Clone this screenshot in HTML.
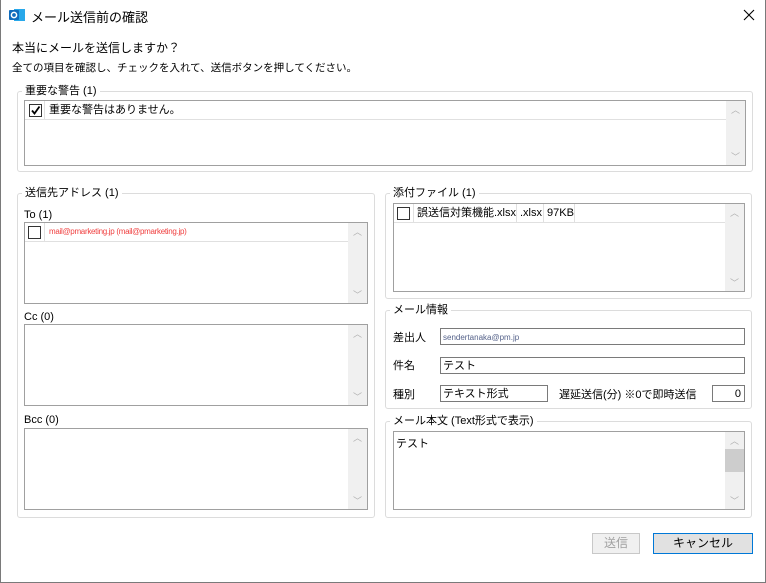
<!DOCTYPE html>
<html><head><meta charset="utf-8"><style>
*{box-sizing:border-box;margin:0;padding:0}
body{width:766px;height:583px;overflow:hidden;background:#fff;font-family:"Liberation Sans","Noto Sans CJK JP",sans-serif;color:#000;position:relative}
.win{position:absolute;left:0;top:0;width:766px;height:583px;border:1px solid #7a7a7a;border-top:none}
.a{position:absolute;white-space:nowrap}
.grp{position:absolute;border:1px solid #dcdcdc;border-radius:3px}
.gl{position:absolute;background:#fff;padding:0 3px;font-size:11px;line-height:13px;color:#000}
.list{position:absolute;border:1px solid #a0a0a0;background:#fff}
.sb{position:absolute;right:0;top:0;bottom:0;width:19px;background:#f0f0f0}
.sb .u,.sb .d{position:absolute;left:0;width:19px;text-align:center;font-size:9px;color:#b0b0b0}
.cb{position:absolute;width:13px;height:13px;border:1px solid #333;background:#fff}
.inp{position:absolute;border:1px solid #7a7a7a;background:#fff;font-size:11px;line-height:15px;padding-left:2px;padding-top:1px}
.lbl{font-size:11px}
.cell{position:absolute;top:3px;font-size:11px;line-height:13px}
</style></head><body>
<div class="win">
<svg class="a" style="left:8px;top:7px" width="17" height="16" viewBox="0 0 17 16"><rect x="5" y="2" width="11" height="12" fill="#28a8ea"/><rect x="0" y="3" width="10" height="10" rx="1" fill="#0f6cbd"/><circle cx="5" cy="8" r="2.6" fill="none" stroke="#fff" stroke-width="1.5"/></svg>
<div class="a" style="left:30px;top:7px;font-size:13px">メール送信前の確認</div>
<svg class="a" style="left:742px;top:9px" width="12" height="12"><path d="M1 1L11 11M11 1L1 11" stroke="#000" stroke-width="1.1"/></svg>
<div class="a" style="left:11px;top:39px;font-size:12px">本当にメールを送信しますか？</div>
<div class="a" style="left:11px;top:60px;font-size:10.5px">全ての項目を確認し、チェックを入れて、送信ボタンを押してください。</div>

<div class="grp" style="left:16px;top:91px;width:736px;height:81px"></div>
<div class="gl" style="left:21px;top:85px">重要な警告 (1)</div>
<div class="list" style="left:23px;top:100px;width:722px;height:66px">
 <div class="a" style="left:0;top:0;width:702px;height:19px;border-bottom:1px solid #e0e0e0"></div>
 <div class="a" style="left:19px;top:0;height:19px;border-left:1px solid #e0e0e0"></div>
 <div class="cb" style="left:4px;top:3px"><svg width="11" height="11" style="position:absolute;left:0;top:0"><path d="M2 5.5L4.5 8.5L9.5 1.5" stroke="#000" stroke-width="1.8" fill="none"/></svg></div>
 <div class="cell" style="left:24px">重要な警告はありません。</div>
 <div class="sb"><div class="u" style="top:2px">︿</div><div class="d" style="bottom:2px">﹀</div></div>
</div>

<div class="grp" style="left:16px;top:193px;width:358px;height:325px"></div>
<div class="gl" style="left:21px;top:187px">送信先アドレス (1)</div>
<div class="a lbl" style="left:23px;top:209px">To (1)</div>
<div class="list" style="left:23px;top:222px;width:344px;height:82px">
 <div class="a" style="left:0;top:0;width:324px;height:19px;border-bottom:1px solid #e0e0e0"></div>
 <div class="a" style="left:19px;top:0;height:19px;border-left:1px solid #e0e0e0"></div>
 <div class="cb" style="left:3px;top:3px"></div>
 <div class="a" style="left:24px;top:4px;font-size:8px;color:#f04040;letter-spacing:-.3px">mail@pmarketing.jp (mail@pmarketing.jp)</div>
 <div class="sb"><div class="u" style="top:2px">︿</div><div class="d" style="bottom:2px">﹀</div></div>
</div>
<div class="a lbl" style="left:23px;top:311px">Cc (0)</div>
<div class="list" style="left:23px;top:324px;width:344px;height:82px"><div class="sb"><div class="u" style="top:2px">︿</div><div class="d" style="bottom:2px">﹀</div></div></div>
<div class="a lbl" style="left:23px;top:414px">Bcc (0)</div>
<div class="list" style="left:23px;top:428px;width:344px;height:82px"><div class="sb"><div class="u" style="top:2px">︿</div><div class="d" style="bottom:2px">﹀</div></div></div>

<div class="grp" style="left:384px;top:193px;width:367px;height:106px"></div>
<div class="gl" style="left:389px;top:187px">添付ファイル (1)</div>
<div class="list" style="left:392px;top:203px;width:352px;height:89px">
 <div class="a" style="left:0;top:0;width:332px;height:19px;border-bottom:1px solid #e0e0e0"></div>
 <div class="a" style="left:19px;top:0;height:19px;border-left:1px solid #e0e0e0"></div>
 <div class="a" style="left:122px;top:0;height:19px;border-left:1px solid #e0e0e0"></div>
 <div class="a" style="left:149px;top:0;height:19px;border-left:1px solid #e0e0e0"></div>
 <div class="a" style="left:180px;top:0;height:19px;border-left:1px solid #e0e0e0"></div>
 <div class="cb" style="left:3px;top:3px"></div>
 <div class="cell" style="left:23px">誤送信対策機能.xlsx</div>
 <div class="cell" style="left:126px">.xlsx</div>
 <div class="cell" style="left:153px">97KB</div>
 <div class="sb"><div class="u" style="top:2px">︿</div><div class="d" style="bottom:2px">﹀</div></div>
</div>

<div class="grp" style="left:384px;top:310px;width:367px;height:99px"></div>
<div class="gl" style="left:389px;top:304px">メール情報</div>
<div class="a lbl" style="left:392px;top:329px">差出人</div>
<div class="inp" style="left:439px;top:328px;width:305px;height:17px;font-size:8px;color:#55628a">sendertanaka@pm.jp</div>
<div class="a lbl" style="left:392px;top:357px">件名</div>
<div class="inp" style="left:439px;top:357px;width:305px;height:17px">テスト</div>
<div class="a lbl" style="left:392px;top:386px">種別</div>
<div class="inp" style="left:439px;top:385px;width:108px;height:17px">テキスト形式</div>
<div class="a lbl" style="left:558px;top:386px">遅延送信(分) ※0で即時送信</div>
<div class="inp" style="left:711px;top:385px;width:33px;height:17px;text-align:right;padding-right:3px">0</div>

<div class="grp" style="left:384px;top:421px;width:367px;height:97px"></div>
<div class="gl" style="left:389px;top:415px">メール本文 (Text形式で表示)</div>
<div class="list" style="left:392px;top:431px;width:352px;height:79px">
 <div class="a" style="left:2px;top:3px;font-size:11px">テスト</div>
 <div class="sb"><div class="u" style="top:2px">︿</div><div style="position:absolute;left:0;top:17px;width:19px;height:23px;background:#cdcdcd"></div><div class="d" style="bottom:2px">﹀</div></div>
</div>

<div class="a" style="left:591px;top:533px;width:48px;height:21px;border:1px solid #c8c8c8;background:#f0f0f0;color:#a0a0a0;font-size:12px;text-align:center;line-height:19px">送信</div>
<div class="a" style="left:652px;top:533px;width:100px;height:21px;border:1px solid #0078d7;background:#e1e1e1;font-size:12px;text-align:center;line-height:19px">キャンセル</div>
</div>
</body></html>
